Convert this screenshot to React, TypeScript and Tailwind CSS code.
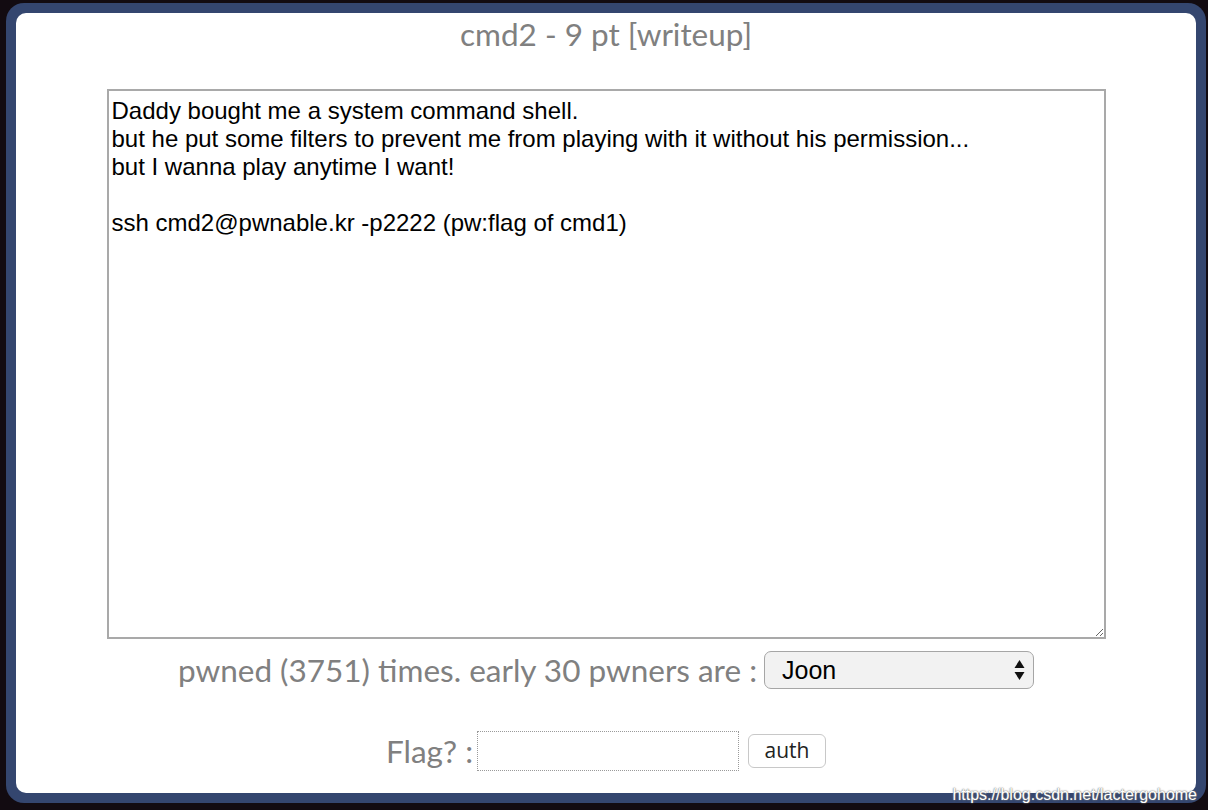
import React from "react";

const lato = { fontFamily: "Lato, 'Open Sans', sans-serif" };
const arial = { fontFamily: "'Liberation Sans', Arial, sans-serif" };

export default function App() {
  const desc = [
    "Daddy bought me a system command shell.",
    "but he put some filters to prevent me from playing with it without his permission...",
    "but I wanna play anytime I want!",
    "",
    "ssh cmd2@pwnable.kr -p2222 (pw:flag of cmd1)",
  ].join("\n");

  return (
    <div className="relative w-[1208px] h-[810px] bg-[#120b11] pt-[3px] pl-[6px] pr-[2px] pb-[7px] overflow-hidden">
      <div className="h-full bg-[#34466f] rounded-[18px] p-[10px]">
        <div className="h-full bg-white rounded-[10px] flex flex-col items-center">
          <h1 className="pt-[2px] text-[31.5px] leading-[38px] text-[#808080]" style={lato}>
            cmd2 - 9 pt [writeup]
          </h1>

          <textarea
            readOnly
            defaultValue={desc}
            className="mt-[36px] w-[999px] h-[550px] border-2 border-[#a9a9a9] px-[3px] pt-[6px] pb-[4px] text-[24px] leading-[28px] text-black outline-none resize"
            style={arial}
          />

          <div className="mt-[12px] flex items-center gap-[7px]">
            <span className="text-[31.5px] leading-[38px] text-[#808080]" style={lato}>
              pwned (3751) times. early 30 pwners are :
            </span>
            <div className="relative">
              <select
                className="appearance-none w-[270px] h-[38px] rounded-[7px] border border-[#a6a6a6] bg-[#f2f2f2] pl-[17px] text-[25px] text-black outline-none"
                style={arial}
                defaultValue="Joon"
              >
                <option>Joon</option>
              </select>
              <svg
                className="absolute right-[9px] top-[8px] pointer-events-none"
                width="11"
                height="22"
                viewBox="0 0 11 22"
              >
                <path d="M5.5 1 L10.5 9 H0.5 Z" fill="#111" />
                <path d="M5.5 21 L10.5 13 H0.5 Z" fill="#111" />
              </svg>
            </div>
          </div>

          <div className="mt-[42px] flex items-center">
            <span className="text-[31.5px] leading-[38px] text-[#808080] mr-[4px]" style={lato}>
              Flag? :
            </span>
            <input
              className="w-[262px] h-[40px] border border-dotted border-[#9a9a9a] outline-none"
              type="text"
            />
            <button
              className="ml-[9px] w-[78px] h-[34px] rounded-[6px] border border-[#c8c8c8] bg-white text-[21px] text-[#222]"
              style={{ fontFamily: "'Open Sans', 'Liberation Sans', sans-serif" }}
            >
              auth
            </button>
          </div>
        </div>
      </div>

      <div
        className="absolute right-[11px] bottom-[6px] text-[16px] leading-[18px] text-white"
        style={{ ...arial, textShadow: "0 0 1px #666, 0 0 2px #888" }}
      >
        https://blog.csdn.net/lactergohome
      </div>
    </div>
  );
}
